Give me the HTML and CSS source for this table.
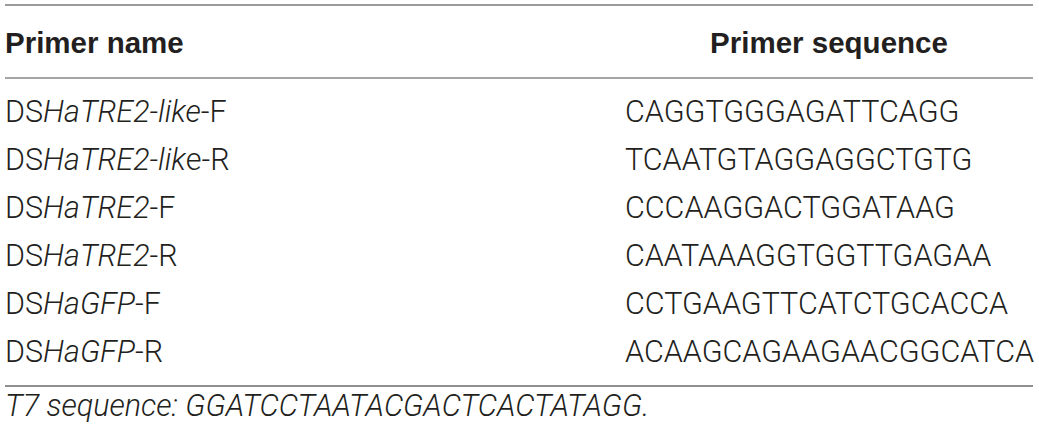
FILE: index.html
```html
<!DOCTYPE html>
<html lang="en">
<head>
<meta charset="utf-8">
<title>Primers</title>
<link rel="stylesheet" href="styles.css">
</head>
<body>
<div class="wrap">
  <table class="primers">
    <thead>
      <tr>
        <th class="col-name">Primer name</th>
        <th class="col-seq">Primer sequence</th>
      </tr>
    </thead>
    <tbody>
      <tr><td>DS<i>HaTRE2-like</i>-F</td><td class="seq">CAGGTGGGAGATTCAGG</td></tr>
      <tr><td>DS<i>HaTRE2-lik</i>e-R</td><td class="seq">TCAATGTAGGAGGCTGTG</td></tr>
      <tr><td>DS<i>HaTRE2</i>-F</td><td class="seq">CCCAAGGACTGGATAAG</td></tr>
      <tr><td>DS<i>HaTRE2</i>-R</td><td class="seq">CAATAAAGGTGGTTGAGAA</td></tr>
      <tr><td>DS<i>HaGFP</i>-F</td><td class="seq">CCTGAAGTTCATCTGCACCA</td></tr>
      <tr><td>DS<i>HaGFP</i>-R</td><td class="seq">ACAAGCAGAAGAACGGCATCA</td></tr>
    </tbody>
  </table>
  <p class="note">T7 sequence: GGATCCTAATACGACTCACTATAGG.</p>
</div>
</body>
</html>
```

FILE: styles.css
```css
html, body {
  margin: 0;
  padding: 0;
  background: #ffffff;
}

.wrap {
  padding-left: 5px;
  color: #231f20;
}

.primers {
  width: 1028px;
  border-collapse: collapse;
  border-spacing: 0;
  table-layout: fixed;
  margin-top: 4px;
}

.primers thead th {
  font-family: "Liberation Sans", Arial, sans-serif;
  font-weight: 700;
  font-size: 29.5px;
  line-height: 32px;
  padding: 21px 0 18px 0;
  border-top: 2px solid #9a9a9a;
  border-bottom: 2px solid #a5a5a5;
}

.col-name {
  width: 620px;
  text-align: left;
}

.col-seq {
  text-align: center;
}

.primers tbody td {
  font-family: "Roboto", "Liberation Sans", sans-serif;
  font-weight: 300;
  font-size: 30.5px;
  line-height: 48px;
  padding: 0;
  text-align: left;
  white-space: nowrap;
}

.primers tbody tr:first-child td {
  padding-top: 9px;
}

.primers tbody tr:last-child td {
  padding-bottom: 9px;
  border-bottom: 2px solid #8f8f8f;
}

.primers i {
  font-style: italic;
}

.note {
  margin: 2px 0 0 0;
  font-family: "Roboto", "Liberation Sans", sans-serif;
  font-weight: 300;
  font-style: italic;
  font-size: 30.5px;
  line-height: 34px;
}
```
